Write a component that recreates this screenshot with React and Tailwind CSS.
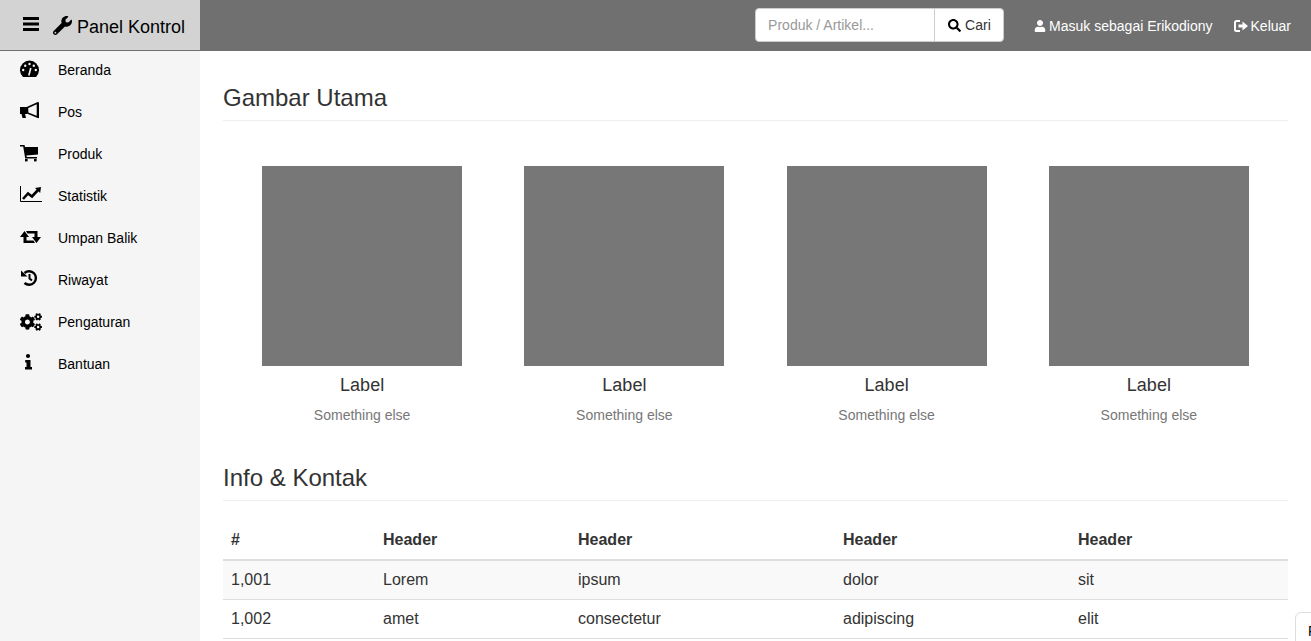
import React from 'react';
import { FaWrench, FaCogs, FaSearch, FaUser } from 'react-icons/fa';

function DashboardIcon() {
  return (
    <svg width="22" height="20" viewBox="0 0 22 20" className="overflow-visible">
      <path d="M3 17 A9.5 9.5 0 1 1 16 17 Z" fill="#000" />
      <g fill="#f5f5f5">
        <circle cx="9.5" cy="4" r="1.2" />
        <circle cx="5.2" cy="5.8" r="1.2" />
        <circle cx="13.8" cy="5.8" r="1.2" />
        <circle cx="3.2" cy="10" r="1.2" />
        <circle cx="15.8" cy="10" r="1.2" />
      </g>
      <path d="M8.8 15.5L10.8 8" stroke="#f5f5f5" strokeWidth="1.6" />
    </svg>
  );
}

function BullhornIcon() {
  return (
    <svg width="22" height="20" viewBox="0 0 22 20" className="overflow-visible">
      <path d="M0 5H7V12H5L6 16H2.5L1.5 12H0Z" fill="#000" />
      <path d="M7.5 5.5L17.5 1V15L7.5 11Z" fill="none" stroke="#000" strokeWidth="1.6" />
      <path d="M17.5 0.5H19V16H17.5Z" fill="#000" />
    </svg>
  );
}

function CartIcon() {
  return (
    <svg width="22" height="20" viewBox="0 0 22 20" className="overflow-visible">
      <path d="M0 1H4.5L5 3H18V10.5L6.4 11.5L6.8 13H17V14.5H5.2L3.2 2.5H0Z" fill="#000" />
      <rect x="5" y="15" width="2.6" height="2.4" fill="#000" />
      <rect x="14" y="15" width="2.6" height="2.4" fill="#000" />
    </svg>
  );
}

function ChartIcon() {
  return (
    <svg width="22" height="20" viewBox="0 0 22 20" className="overflow-visible">
      <path d="M0.5 0V15.5H22" fill="none" stroke="#000" strokeWidth="1" />
      <path d="M3 13L8 7.5L12 10.5L18.5 3.5" fill="none" stroke="#000" strokeWidth="2.6" />
      <path d="M15 2L21 1L20.2 7Z" fill="#000" />
    </svg>
  );
}

function RetweetIcon() {
  return (
    <svg width="22" height="20" viewBox="0 0 22 20" className="overflow-visible">
      <g transform="translate(0 3)">
        <path d="M4.5 0L9 6H6.5V9.5H13.5L15 12H3.5V6H0Z" fill="#000" />
        <path d="M16.5 12L12 6H14.5V2.5H7.5L6 0H17.5V6H21Z" fill="#000" />
      </g>
    </svg>
  );
}

function HistoryIcon() {
  return (
    <svg width="22" height="20" viewBox="0 0 22 20" className="overflow-visible">
      <g transform="translate(1 0)">
        <path d="M3.5 3A6.8 6.8 0 1 1 3.5 13" fill="none" stroke="#000" strokeWidth="2.4" />
        <path d="M0 0.5L6.5 6.5H0Z" fill="#000" />
        <path d="M8.5 4V8.5L11 10.5" fill="none" stroke="#000" strokeWidth="2" />
      </g>
    </svg>
  );
}

function CogsIcon() {
  return <FaCogs className="h-[18px] w-[22px]" />;
}

function InfoIcon() {
  return (
    <svg width="22" height="20" viewBox="0 0 22 20" className="overflow-visible">
      <circle cx="8" cy="2" r="2.1" fill="#000" />
      <path d="M5.2 6H10.5V13H12V15.5H5V13H6.5V8.5H5.2Z" fill="#000" />
    </svg>
  );
}

function BarsIcon() {
  return (
    <svg width="16" height="14" viewBox="0 0 16 14" className="-mt-[2px]">
      <rect y="0" width="16" height="3" fill="#000" />
      <rect y="5.5" width="16" height="3" fill="#000" />
      <rect y="11" width="16" height="3" fill="#000" />
    </svg>
  );
}

function LogoutIcon() {
  return (
    <svg width="14" height="12" viewBox="0 0 14 12">
      <path d="M6 1H2.5Q1 1 1 2.5V9.5Q1 11 2.5 11H6" fill="none" stroke="#fff" strokeWidth="2" />
      <path d="M4.5 4.5H8.5V1.5L14 6L8.5 10.5V7.5H4.5Z" fill="#fff" />
    </svg>
  );
}

const navItems = [
  { label: 'Beranda', Icon: DashboardIcon },
  { label: 'Pos', Icon: BullhornIcon },
  { label: 'Produk', Icon: CartIcon },
  { label: 'Statistik', Icon: ChartIcon },
  { label: 'Umpan Balik', Icon: RetweetIcon },
  { label: 'Riwayat', Icon: HistoryIcon },
  { label: 'Pengaturan', Icon: CogsIcon },
  { label: 'Bantuan', Icon: InfoIcon },
];

const rows = [
  ['1,001', 'Lorem', 'ipsum', 'dolor', 'sit'],
  ['1,002', 'amet', 'consectetur', 'adipiscing', 'elit'],
];

const colWidths = ['w-[152px]', 'w-[195px]', 'w-[265px]', 'w-[235px]', 'w-[218px]'];

export default function App() {
  return (
    <div className="relative h-[641px] overflow-hidden bg-white font-['Liberation_Sans',Arial,sans-serif] text-sm text-[#333]">
      <header className="flex h-[51px] items-stretch bg-[#707070]">
        <div className="flex w-[200px] items-center border-b border-[#707070] bg-[#d3d3d3] pl-[23px] text-black">
          <BarsIcon />
          <FaWrench className="ml-[14px] text-[19px]" />
          <span className="ml-[5px] mt-[6px] text-[18px]">Panel Kontrol</span>
        </div>
        <div className="flex flex-1 items-center justify-end pr-5 text-white">
          <div className="mb-[1px] flex h-[34px] w-[249px] rounded border border-[#ccc] bg-white text-black">
            <input
              placeholder="Produk / Artikel..."
              className="w-[179px] rounded-l border-r border-[#ccc] px-3 text-sm outline-none placeholder:text-[#999]"
            />
            <button className="flex flex-1 items-center gap-1 pl-[13px] text-sm text-[#333]">
              <FaSearch className="text-[13px] text-black" />
              Cari
            </button>
          </div>
          <a className="ml-[30px] flex items-center gap-[3px]">
            <FaUser className="text-[12px]" />
            Masuk sebagai Erikodiony
          </a>
          <a className="ml-[21px] flex items-center gap-[3px]">
            <LogoutIcon />
            Keluar
          </a>
        </div>
      </header>

      <div className="flex">
        <nav className="flex h-[590px] w-[200px] flex-col gap-1 bg-[#f5f5f5] text-black">
          {navItems.map(({ label, Icon }) => (
            <a key={label} className="flex h-[38px] items-center pl-5">
              <span className="flex w-[38px] justify-start">
                <Icon />
              </span>
              {label}
            </a>
          ))}
        </nav>

        <main className="flex-1 px-[23px] pt-[34px]">
          <h2 className="border-b border-[#eee] pb-[9px] text-2xl leading-[1.1] text-[#333]">Gambar Utama</h2>

          <div className="mt-[45px] grid grid-cols-4 px-2">
            {[1, 2, 3, 4].map((n) => (
              <div key={n} className="flex flex-col items-center">
                <div className="h-[200px] w-[200px] bg-[#777777]" />
                <h4 className="mt-[9px] text-lg leading-5 text-[#333]">Label</h4>
                <span className="mt-[10px] leading-5 text-[#777]">Something else</span>
              </div>
            ))}
          </div>

          <h2 className="mt-[40px] border-b border-[#eee] pb-[8px] text-2xl leading-[1.1] text-[#333]">Info &amp; Kontak</h2>

          <table className="mt-[19px] w-full table-fixed border-collapse text-base">
            <thead>
              <tr className="border-b-2 border-[#ddd]">
                {['#', 'Header', 'Header', 'Header', 'Header'].map((h, i) => (
                  <th key={i} className={`${colWidths[i]} p-2 text-left font-bold leading-[23px]`}>{h}</th>
                ))}
              </tr>
            </thead>
            <tbody>
              {rows.map((row, r) => (
                <tr key={row[0]} className={`border-b border-[#ddd] ${r === 0 ? 'bg-[#f9f9f9]' : ''}`}>
                  {row.map((cell) => (
                    <td key={cell} className="p-2 leading-[22px]">{cell}</td>
                  ))}
                </tr>
              ))}
            </tbody>
          </table>
        </main>
      </div>

      <div className="absolute left-[1295px] top-[612px] h-[40px] w-[40px] rounded-md border border-[#ddd] bg-white pl-[12px] pt-[8px] text-sm text-black">
        F
      </div>
    </div>
  );
}
